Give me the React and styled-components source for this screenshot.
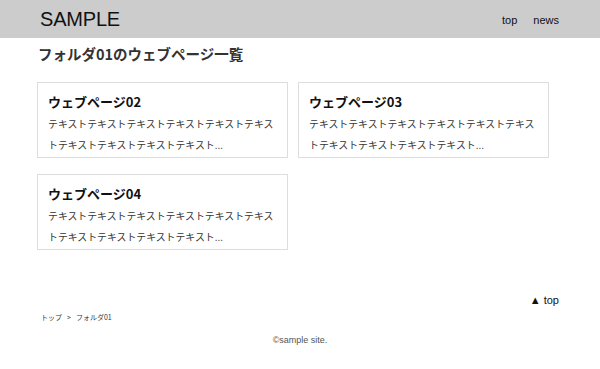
import React from 'react';
import styled, { createGlobalStyle } from 'styled-components';

const GlobalStyle = createGlobalStyle`
  html, body {
    margin: 0;
    padding: 0;
    background: #fff;
  }
  body {
    font-family: 'Liberation Sans', 'Noto Sans CJK JP', sans-serif;
    color: #333;
  }
  a {
    color: inherit;
    text-decoration: none;
  }
`;

const jp = `'Noto Sans CJK JP', 'Liberation Sans', sans-serif`;

const Header = styled.header`
  background: #ccc;
  height: 38px;
  display: flex;
  align-items: center;
  justify-content: space-between;
  padding: 0 41px 0 40px;
`;

const Logo = styled.div`
  font-size: 20px;
  color: #111;
  letter-spacing: -0.2px;
`;

const Nav = styled.nav`
  display: flex;
  gap: 16px;
  font-size: 11px;
  color: #111;

  a {
    padding-top: 1px;
  }
`;

const Main = styled.main`
  padding: 0 41px 0 37px;
`;

const PageTitle = styled.h1`
  margin: 6px 0 0 1px;
  font-family: ${jp};
  font-size: 14.5px;
  font-weight: bold;
  line-height: 20px;
  color: #333;
`;

const CardGrid = styled.div`
  display: grid;
  grid-template-columns: 251px 251px;
  column-gap: 10px;
  row-gap: 16px;
  margin-top: 18px;
`;

const Card = styled.a`
  display: block;
  border: 1px solid #ddd;
  padding: 10px 10px 5px 10px;
  height: 76px;
  box-sizing: border-box;
  font-family: ${jp};
`;

const CardTitle = styled.h2`
  margin: 0;
  font-size: 13px;
  font-weight: bold;
  line-height: 18px;
  color: #111;
`;

const CardText = styled.p`
  margin: 3px 0 0;
  font-size: 9.9px;
  line-height: 21px;
  color: #333;
`;

const PageTop = styled.div`
  display: flex;
  justify-content: flex-end;
  margin-top: 44px;
  font-size: 11px;
  color: #111;
`;

const Breadcrumb = styled.div`
  padding: 0 41px;
  margin-top: 6px;
  font-family: ${jp};
  font-size: 7px;
  color: #333;
  display: flex;
  gap: 5px;
`;

const Footer = styled.footer`
  text-align: center;
  font-size: 9px;
  color: #555;
  margin-top: 13px;
`;

const cards = [
  { id: 2, title: 'ウェブページ02' },
  { id: 3, title: 'ウェブページ03' },
  { id: 4, title: 'ウェブページ04' },
];

const App = () => (
  <>
    <GlobalStyle />
    <Header>
      <Logo>SAMPLE</Logo>
      <Nav>
        <a href="#top">top</a>
        <a href="#news">news</a>
      </Nav>
    </Header>
    <Main>
      <PageTitle>フォルダ01のウェブページ一覧</PageTitle>
      <CardGrid>
        {cards.map((card) => (
          <Card key={card.id} href="#page">
            <CardTitle>{card.title}</CardTitle>
            <CardText>
              テキストテキストテキストテキストテキストテキストテキストテキストテキストテキスト...
            </CardText>
          </Card>
        ))}
      </CardGrid>
      <PageTop>▲ top</PageTop>
    </Main>
    <Breadcrumb>
      <span>トップ</span>
      <span>&gt;</span>
      <span>フォルダ01</span>
    </Breadcrumb>
    <Footer>©sample site.</Footer>
  </>
);

export default App;
